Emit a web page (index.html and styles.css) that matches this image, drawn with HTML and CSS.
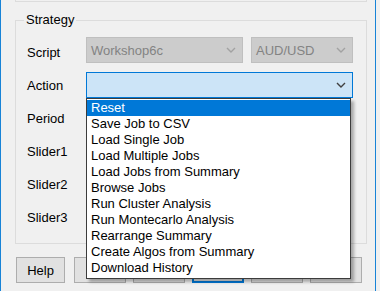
FILE: index.html
```html
<!DOCTYPE html>
<html lang="en">
<head>
	<meta charset="UTF-8">
	<meta name="viewport" content="width=device-width, initial-scale=1.0">
	<title>Strategy</title>
	<link rel="stylesheet" href="styles.css">
</head>
<body>
	<div class="window">
		<div class="prev-group"></div>
		<fieldset class="group">
			<legend>Strategy</legend>
			<div class="row row-script">
				<span class="label">Script</span>
				<div class="combo combo-off combo-script">
					<span class="value">Workshop6c</span>
					<svg class="chev" viewBox="0 0 10 6" width="10" height="6"><polyline points="1,1 5,5 9,1"/></svg>
				</div>
				<div class="combo combo-off combo-pair">
					<span class="value">AUD/USD</span>
					<svg class="chev" viewBox="0 0 10 6" width="10" height="6"><polyline points="1,1 5,5 9,1"/></svg>
				</div>
			</div>
			<div class="row row-action">
				<span class="label">Action</span>
				<div class="combo-wrap">
					<div class="combo combo-on">
						<span class="value"></span>
						<svg class="chev" viewBox="0 0 10 6" width="10" height="6"><polyline points="1,1 5,5 9,1"/></svg>
					</div>
					<ul class="drop-list">
						<li class="sel">Reset</li>
						<li>Save Job to CSV</li>
						<li>Load Single Job</li>
						<li>Load Multiple Jobs</li>
						<li>Load Jobs from Summary</li>
						<li>Browse Jobs</li>
						<li>Run Cluster Analysis</li>
						<li>Run Montecarlo Analysis</li>
						<li>Rearrange Summary</li>
						<li>Create Algos from Summary</li>
						<li>Download History</li>
					</ul>
				</div>
			</div>
			<div class="row"><span class="label">Period</span></div>
			<div class="row"><span class="label">Slider1</span></div>
			<div class="row"><span class="label">Slider2</span></div>
			<div class="row"><span class="label">Slider3</span></div>
		</fieldset>
		<div class="buttons">
			<button class="btn btn-help">Help</button>
			<button class="btn"></button>
			<button class="btn"></button>
			<button class="btn btn-default"></button>
			<button class="btn"></button>
			<button class="btn">Start</button>
		</div>
	</div>
</body>
</html>
```

FILE: styles.css
```css
*{
	margin: 0;
	padding: 0;
	box-sizing: border-box;
}

body{
	background-color: #f0f0f0;
	font-family: "Liberation Sans", Arial, sans-serif;
	font-size: 13px;
	color: #000;
}

.window{
	width: 376px;
	min-height: 100vh;
	padding: 0 8px 0 14px;
	border-left: 1px solid #1883d7;
	border-right: 1px solid #1883d7;
	background-color: #f0f0f0;
}

.prev-group{
	height: 2px;
	border: 1px solid #dcdcdc;
	border-top: none;
}

/* group box */
.group{
	margin-top: 10px;
	padding: 0 0 9px 11px;
	border: 1px solid #dcdcdc;
	min-width: 0;
}

.group legend{
	margin-left: -3px;
	padding: 0 2px;
	line-height: 16px;
}

.row{
	display: flex;
	align-items: center;
	height: 33px;
}

.row:first-of-type{
	margin-top: 8px;
}

.label{
	width: 59px;
	line-height: 15px;
}

.row-script .combo{
	align-self: flex-start;
	margin-top: 1px;
}

.row-action{
	align-items: flex-start;
}

.row-action .label{
	align-self: center;
}

/* combo boxes */
.combo{
	display: flex;
	align-items: center;
	justify-content: space-between;
	height: 26px;
	padding: 0 6px 0 4px;
	border: 1px solid #bfbfbf;
}

.combo .chev{
	fill: none;
	stroke-width: 1.4;
}

.combo-off{
	background-color: #cccccc;
	color: #838383;
}

.combo-off .chev{
	stroke: #a2a2a2;
}

.combo-script{
	width: 157px;
}

.combo-pair{
	width: 102px;
	margin-left: 8px;
}

.combo-wrap{
	position: relative;
	margin-top: 3px;
}

.combo-on{
	width: 267px;
	border-color: #0078d7;
	background-color: #cce4f7;
}

.combo-on .chev{
	stroke: #404040;
}

/* open dropdown list */
.drop-list{
	position: absolute;
	top: 100%;
	left: 0;
	z-index: 5;
	width: 265px;
	padding: 1px 0 2px;
	list-style: none;
	background-color: #fff;
	border: 1px solid #3c3c3c;
	box-shadow: 3px 3px 3px rgba(0,0,0,.3);
}

.drop-list li{
	height: 16px;
	line-height: 16px;
	padding-left: 4px;
	white-space: nowrap;
}

.drop-list .sel{
	background-color: #0078d7;
	color: #fff;
}

/* bottom buttons */
.buttons{
	display: flex;
	gap: 7px;
	margin-top: 13px;
	padding-left: 1px;
}

.btn{
	width: 52px;
	height: 26px;
	font-family: inherit;
	font-size: 13px;
	color: #000;
	background-color: #e1e1e1;
	border: 1px solid #adadad;
}

.btn-help{
	width: 49px;
	margin-right: 2px;
}

.btn-default{
	border: 2px solid #0078d7;
}
```
